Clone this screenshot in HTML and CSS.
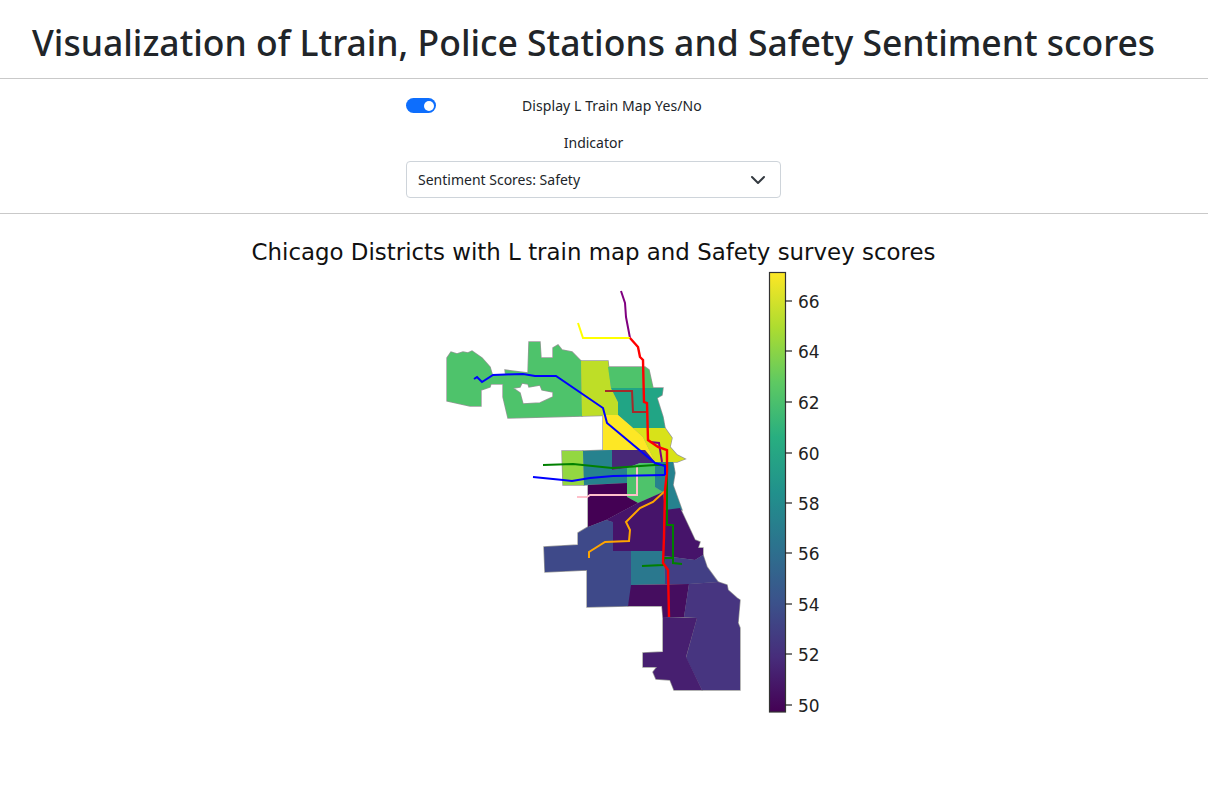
FILE: index.html
```html
<!DOCTYPE html>
<html lang="en">
<head>
    <meta charset="UTF-8">
    <meta name="viewport" content="width=device-width, initial-scale=1.0">
    <title>Ltrain Visualization</title>
    <link rel="stylesheet" href="styles.css">
</head>
<body>
    <h1 class="page-title">Visualization of Ltrain, Police Stations and Safety Sentiment scores</h1>
    <hr class="divider">
    <div class="controls">
        <div class="switch-row">
            <span class="switch"></span>
            <label class="switch-label">Display L Train Map Yes/No</label>
        </div>
        <div class="field-label">Indicator</div>
        <div class="select-box">
            <span>Sentiment Scores: Safety</span>
            <svg class="chevron" width="16" height="16" viewBox="0 0 16 16"><path d="M2 5l6 6 6-6" fill="none" stroke="#343a40" stroke-width="2" stroke-linecap="round" stroke-linejoin="round"/></svg>
        </div>
    </div>
    <hr class="divider">
    <div class="chart-wrap">
        <!-- viewBox uses page coordinates -->
        <svg class="chart" width="700" height="500" viewBox="243 232 700 500">
            <defs>
                <linearGradient id="viridis" x1="0" y1="1" x2="0" y2="0">
                    <stop offset="0" stop-color="#440154"/>
                    <stop offset="0.125" stop-color="#472d7b"/>
                    <stop offset="0.25" stop-color="#3b528b"/>
                    <stop offset="0.375" stop-color="#2c728e"/>
                    <stop offset="0.5" stop-color="#21918c"/>
                    <stop offset="0.625" stop-color="#28ae80"/>
                    <stop offset="0.75" stop-color="#5ec962"/>
                    <stop offset="0.875" stop-color="#addc30"/>
                    <stop offset="1" stop-color="#fde725"/>
                </linearGradient>
                <g id="district-shapes">
                    <polygon fill="#4ec36b" points="447,358 451,352 457,354 463,352 468,353 472,351 482,358 490,367 493,377 490,387 481,390 481,406 470,406 447,401"/>
                    <rect fill="#4ec36b" x="490" y="375" width="16" height="9"/>
                    <path fill="#4ec36b" fill-rule="evenodd" d="M505,370 L528,373 L529,342 L540,342 L541,358 L553,358 L553,348 L558,345 L562,350 L572,352 L581,361 L582,416 L508,418 L503,397 L503,385 L506,377 Z M513,388 L520,387 L522,383 L528,384 L529,387 L540,385 L542,390 L553,392 L553,397 L540,403 L523,404 L520,393 Z"/>
                    <polygon fill="#bede27" points="581,361 608,361 611,388 618,402 618,415 582,416"/>
                    <polygon fill="#4ec36b" points="608,367 645,367 649,370 653,388 611,388"/>
                    <polygon fill="#21a585" points="611,388 663,388 662,395 657,398 663,417 665,428 633,428 618,415 618,402"/>
                    <polygon fill="#fde725" points="603,415 618,415 633,428 643,437 655,462 645,450 612,450 603,450"/>
                    <polygon fill="#d8e219" points="633,428 665,428 672,438 670,447 677,455 685,459 677,462 655,462 643,437"/>
                    <polygon fill="#93d741" points="562,451 583,451 584,485 563,485"/>
                    <polygon fill="#26828e" points="583,451 612,450 612,470 627,468 627,483 584,485"/>
                    <polygon fill="#482878" points="612,450 645,450 655,462 655,463 640,463 627,468 612,470"/>
                    <polygon fill="#4ec36b" points="627,468 640,463 655,463 655,487 663,492 638,503 627,497"/>
                    <polygon fill="#26828e" points="655,462 673,462 675,473 673,485 682,510 665,510 663,492 655,487"/>
                    <polygon fill="#440154" points="588,485 627,483 627,497 638,503 606,520 588,527"/>
                    <polygon fill="#46146a" points="638,503 663,492 665,510 680,508 695,540 700,542 698,548 703,548 703,555 695,560 664,556 630,551 613,551 612,522 606,520"/>
                    <polygon fill="#3e4989" points="606,520 613,522 613,551 631,551 631,597 628,606 587,607 587,570 545,572 544,547 578,545 578,533 588,527"/>
                    <polygon fill="#2a788e" points="631,551 664,551 665,584 631,585"/>
                    <polygon fill="#423f85" points="664,556 695,560 703,555 707,567 715,578 718,582 689,584 665,584"/>
                    <polygon fill="#450d5f" points="631,585 689,584 684,617 663,617 662,606 628,606"/>
                    <polygon fill="#473580" points="689,584 718,582 727,585 728,590 737,598 740,600 738,623 740,628 740,690 702,690 686,658 697,618 684,617"/>
                    <polygon fill="#471f70" points="663,617 697,618 686,657 702,690 674,690 670,680 656,679 653,672 657,667 643,667 643,653 663,652"/>
                </g>
            </defs>
            <text class="chart-title" x="593.5" y="260" text-anchor="middle">Chicago Districts with L train map and Safety survey scores</text>

            <g class="districts">
                <use href="#district-shapes" stroke="#999" stroke-width="1.4"/>
                <use href="#district-shapes"/>
            </g>

            <g class="lines">
                <polyline stroke="#800080" points="621,291 625,303 626,317 630,338"/>
                <polyline stroke="#ffff00" points="578,323 583,338 630,338"/>
                <polyline stroke="#a52a2a" points="605,391 632,391 633,412 646,412"/>
                <polyline stroke="#ffc0cb" points="637,467 637,495 590,495 587,497 577,497"/>
                <polyline stroke="#ffa500" points="589,558 589,552 605,542 629,541 630,530 626,522 640,508 653,502 665,491"/>
                <polyline stroke="#008000" points="543,465 573,464 612,468 655,465 667,465 667,525 673,525 673,563 682,564"/>
                <polyline stroke="#008000" points="642,566 663,565 664,558 673,558"/>
                <polyline stroke="#800080" points="650,442 659,443 662,462"/>
                <polyline class="line-main" stroke="#ff0000" points="630,338 638,347 640,357 643,360 644,402 647,403 648,440 658,447 667,450 667,472 665,490 664,537 663,563 668,570 669,617"/>
                <polyline stroke="#0000ff" points="474,379 477,377 482,382 493,375 523,374 535,376 556,376 603,408 607,423 655,463 665,466 665,475"/>
                <polyline stroke="#0000ff" points="533,477 563,480 572,481 590,478 613,476 665,475"/>
            </g>

            <rect x="769.5" y="272.5" width="16" height="439.5" fill="url(#viridis)" stroke="#333" stroke-width="1.2"/>
            <g class="ticks">
                <line x1="785" x2="792" y1="301" y2="301"/>
                <line x1="785" x2="792" y1="351" y2="351"/>
                <line x1="785" x2="792" y1="402" y2="402"/>
                <line x1="785" x2="792" y1="453" y2="453"/>
                <line x1="785" x2="792" y1="503" y2="503"/>
                <line x1="785" x2="792" y1="553" y2="553"/>
                <line x1="785" x2="792" y1="604" y2="604"/>
                <line x1="785" x2="792" y1="654" y2="654"/>
                <line x1="785" x2="792" y1="705" y2="705"/>
            </g>
            <g class="tick-labels">
                <text x="798" y="308">66</text>
                <text x="798" y="358">64</text>
                <text x="798" y="409">62</text>
                <text x="798" y="460">60</text>
                <text x="798" y="510">58</text>
                <text x="798" y="560">56</text>
                <text x="798" y="611">54</text>
                <text x="798" y="661">52</text>
                <text x="798" y="712">50</text>
            </g>
        </svg>
    </div>
</body>
</html>
```

FILE: styles.css
```css
* {
  margin: 0;
  padding: 0;
  box-sizing: border-box;
}

body {
  font-family: "Noto Sans", "Open Sans", Arial, sans-serif;
  background-color: #fff;
  color: #212529;
  font-size: 14px;
  overflow: hidden;
}

.page-title {
  font-size: 35.5px;
  font-weight: 500;
  line-height: 43px;
  padding: 21px 0 14px 32px;
  white-space: nowrap;
}

.divider {
  border: none;
  border-top: 1px solid #c9c9c9;
}

.controls {
  width: 375px;
  margin-left: 406px;
  padding: 17px 0 15px;
}

.switch-row {
  display: flex;
  align-items: center;
  height: 19px;
}

.switch {
  position: relative;
  width: 30px;
  height: 15px;
  border-radius: 8px;
  background-color: #0d6efd;
}

.switch::after {
  content: "";
  position: absolute;
  right: 2px;
  top: 2.5px;
  width: 10px;
  height: 10px;
  border-radius: 50%;
  background-color: #fff;
}

.switch-label {
  margin-left: 86px;
  letter-spacing: 0.08px;
}

.field-label {
  text-align: center;
  line-height: 19px;
  margin-top: 18px;
}

.select-box {
  display: flex;
  align-items: center;
  justify-content: space-between;
  height: 37px;
  margin-top: 9px;
  padding: 0 14px 0 11px;
  border: 1px solid #ced4da;
  border-radius: 4px;
}

.chart-wrap {
  padding-left: 243px;
  padding-top: 18px;
}

.chart {
  display: block;
}

.chart-title {
  font-family: "DejaVu Sans", sans-serif;
  font-size: 22.9px;
  fill: #111;
}

.districts {
  filter: blur(0.4px);
}

.lines polyline {
  fill: none;
  stroke-width: 2;
  filter: blur(0.4px);
}

.lines .line-main {
  stroke-width: 2.4;
}

.ticks line {
  stroke: #222;
  stroke-width: 1.2;
}

.tick-labels text {
  font-family: "DejaVu Sans", sans-serif;
  font-size: 17px;
  fill: #222;
}
```
